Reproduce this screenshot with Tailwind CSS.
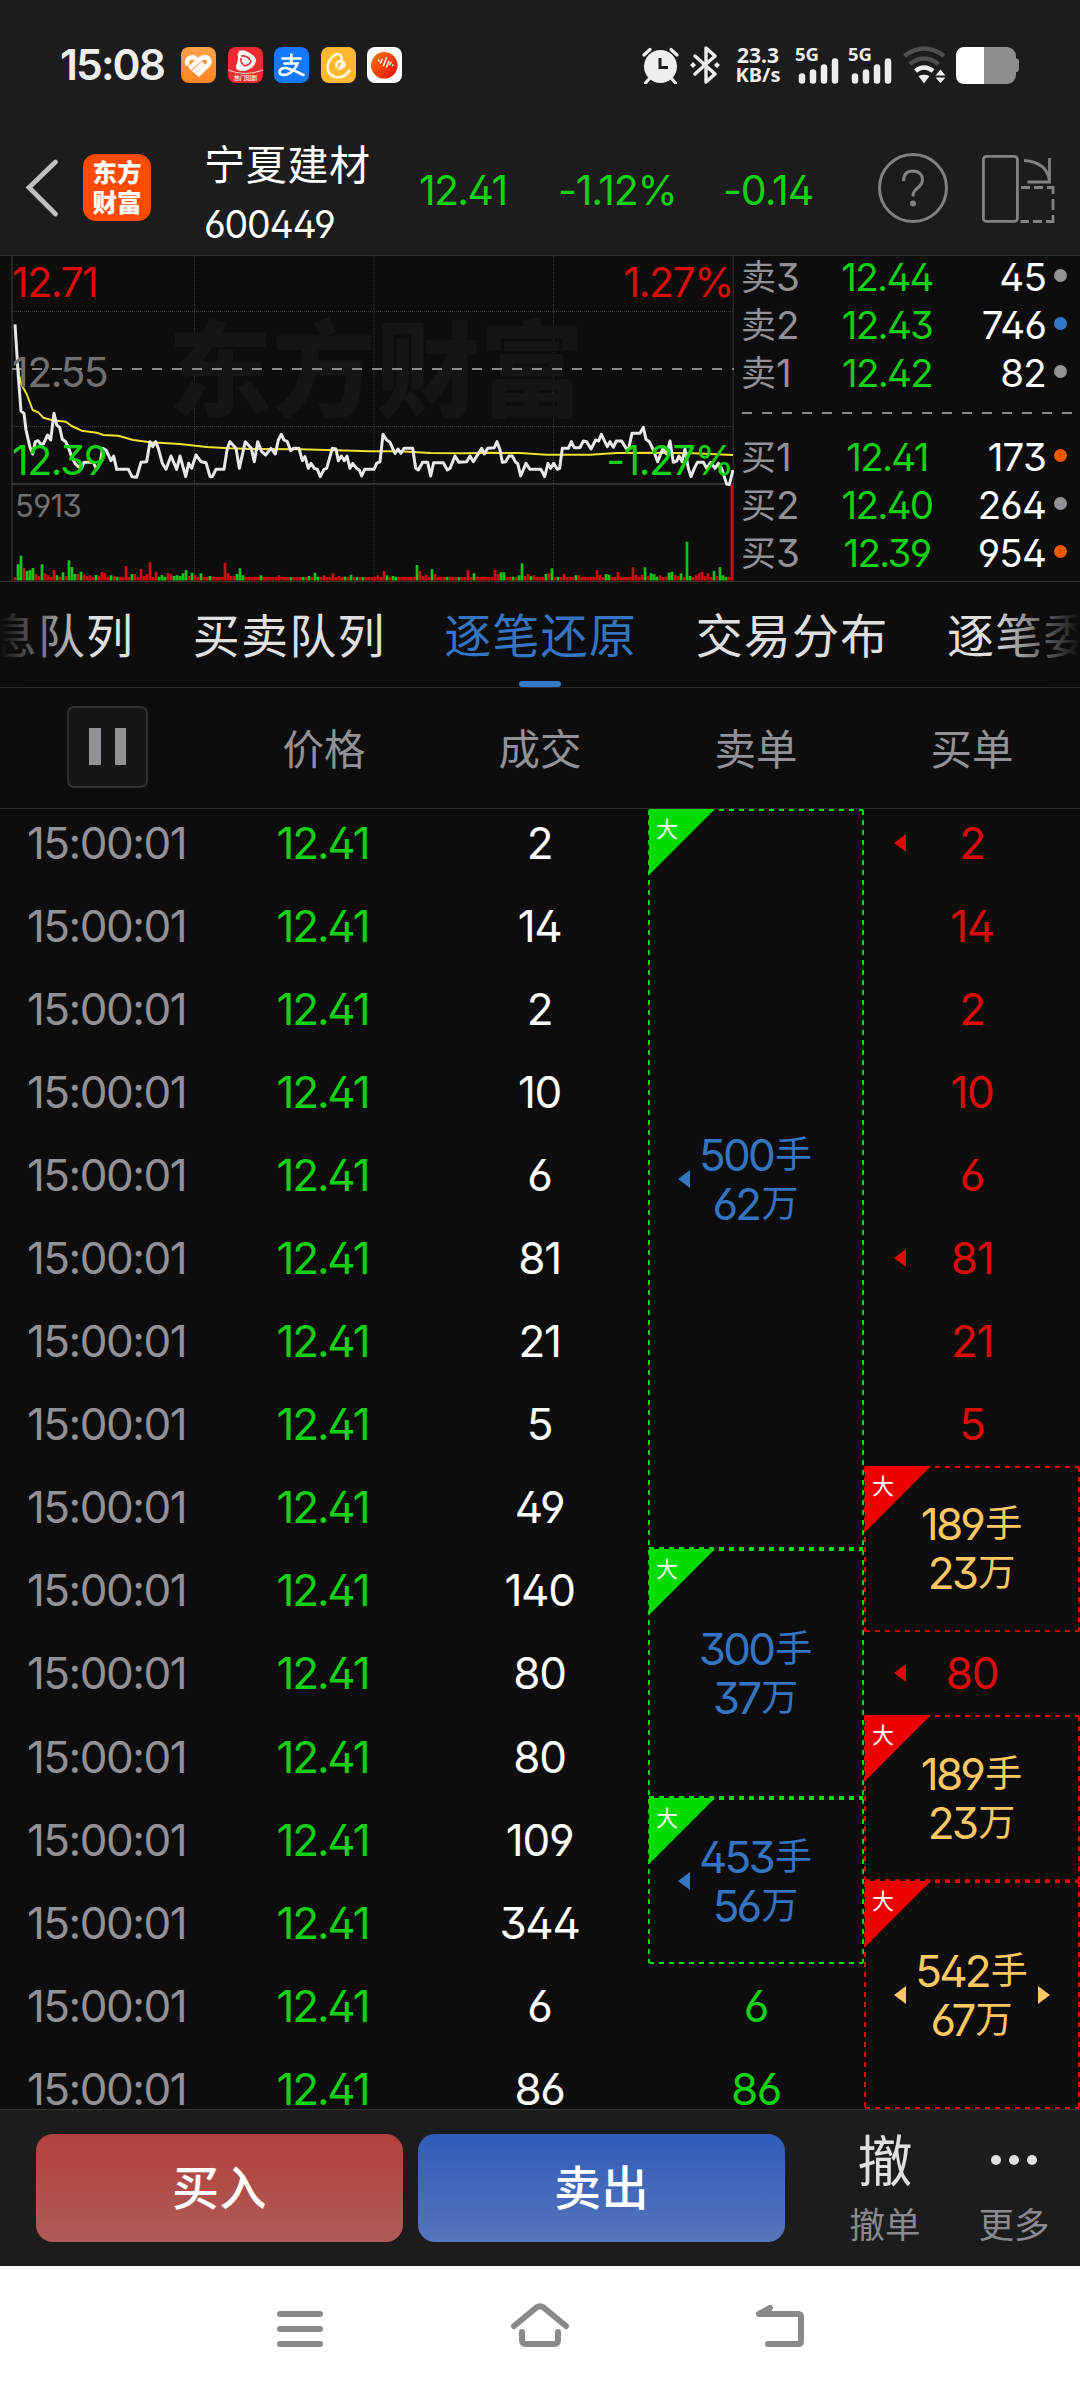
<!DOCTYPE html>
<html lang="zh-CN">
<head>
<meta charset="utf-8">
<title>宁夏建材 600449</title>
<script src="https://cdn.jsdelivr.net/npm/@tailwindcss/browser@4"></script>
</head>
<body class="w-[1080px] h-[2392px] overflow-hidden bg-[#0d0d0d] text-white font-[Inter,'Noto_Sans_CJK_SC',sans-serif] [font-feature-settings:'ss01'] whitespace-nowrap">

<header class="h-[256px] bg-[#1c1c1c] border-b border-[#333]">
  <!-- status bar -->
  <div class="h-[130px] flex items-center pl-[60px] text-[#eee]">
    <div class="w-[121px] text-[42.500px] leading-[50px] font-semibold tracking-[-1.900px]">15:08</div>
    <div class="flex gap-[11.5px]">
      <svg class="w-[35px] h-[36px]" viewBox="0 0 35 36"><defs><linearGradient id="o" x1="0" y1="0" x2="0" y2="1"><stop offset="0" stop-color="#ffa24a"/><stop offset="1" stop-color="#ff8420"/></linearGradient></defs><rect width="35" height="36" rx="8" fill="url(#o)"/><g fill="none" stroke="#fff" stroke-width="4.600" stroke-linecap="butt"><path d="M6.500 18.500Q4.500 12 10 10.500Q13 9.800 15 12"/><path d="M8.500 21.500L19.500 11.500Q26 8.500 28.300 13Q29 16.500 26 19L16 28.500"/><path d="M12.500 25.300L22.500 15.800"/></g></svg>
      <svg class="w-[35px] h-[36px]" viewBox="0 0 35 36"><rect width="35" height="36" rx="8" fill="#f02a30"/><path d="M0 23Q17.500 30 35 23" fill="none" stroke="#ffd9d0" stroke-width="1"/><path d="M11 4Q15 2 20 5Q29 10 28 14Q26 22 16 24Q7 24 8 19Q11 12 9.500 8Z" fill="#fff"/><path d="M13 9Q19 8 22 13M23 13Q23 18 16 19M13 11Q12 16 17 19" fill="none" stroke="#f02a30" stroke-width="1.600"/><text x="17.500" y="33.300" text-anchor="middle" font-size="5.800" font-weight="500" fill="#fff" font-family="Noto Sans CJK SC">热门短剧</text></svg>
      <svg class="w-[35px] h-[36px]" viewBox="0 0 35 36"><rect width="35" height="36" rx="8" fill="#1677ff"/><g fill="none" stroke="#fff" stroke-width="2.600" stroke-linecap="round"><path d="M8.500 11.500H26.500M17.300 7.500V16M10.500 16.500H23.500Q20 25 13 27.500Q6 29 5.500 25Q6 20.500 12 21Q20 23 29.500 28"/></g></svg>
      <svg class="w-[35px] h-[36px]" viewBox="0 0 35 36"><rect width="35" height="36" rx="8" fill="#ffb830"/><path d="M15.500 19.500Q15 14 19.500 14Q24 14.500 23.500 18.500Q22 21.500 18.500 21.500Q21.500 18 21 12Q20 6.500 16 7Q8.500 10 6.500 19Q6.500 28 14 30Q24 31.500 28.500 23.500" fill="none" stroke="#fff6dc" stroke-width="2.600" stroke-linecap="round"/></svg>
      <svg class="w-[35px] h-[36px]" viewBox="0 0 35 36"><defs><linearGradient id="r" x1="0" y1="0" x2="1" y2="1"><stop offset="0" stop-color="#f87a08"/><stop offset="1" stop-color="#e80808"/></linearGradient></defs><rect width="35" height="36" rx="8" fill="#fff"/><circle cx="17.300" cy="18.300" r="13.300" fill="url(#r)"/><path d="M11.500 13L12 14M13.500 16L15 12.500M16.500 18.500L19.500 11M19.500 20L22 14.500M23 17.500L24 15.500M25.500 18.500L26 18" stroke="#fff" stroke-width="1.500" stroke-linecap="round"/></svg>
    </div>
    <svg class="ml-[240px] w-[37px] h-[37px]" viewBox="0 0 37 37"><circle cx="18.500" cy="19.500" r="16.500" fill="#eee"/><path d="M2 8L8 2.500M35 8L29 2.500M7 32L3.500 36M30 32L33.500 36" stroke="#eee" stroke-width="3.200" stroke-linecap="round"/><path d="M18 11V20.500H26" fill="none" stroke="#1c1c1c" stroke-width="3"/></svg>
    <svg class="ml-[11px] w-[30px] h-[38px]" viewBox="0 0 30 38"><path d="M5 10L25 28L16 36V2L25 10L5 28" fill="none" stroke="#eee" stroke-width="3.400" stroke-linejoin="round" stroke-linecap="round"/><path d="M3 16l3 3-3 3-3-3zM27 16l3 3-3 3-3-3z" fill="#eee"/></svg>
    <div class="ml-[14px] w-[48px] text-center font-['Noto_Sans'] font-bold text-[21px] leading-[20.500px]"><div>23.3</div><div class="text-[20px]">KB/s</div></div>
    <div class="ml-[14px] flex gap-[10px]" id="signals"></div>
    <svg class="ml-[10px] w-[45px] h-[38px]" viewBox="0 0 45 38"><g fill="none" stroke-width="4.600"><path d="M2.500 10Q22 -5 42 10" stroke="#505050"/><path d="M8 18Q22 7 36.500 18" stroke="#505050"/><path d="M13.500 25Q22 18 31 25" stroke="#eee"/></g><path d="M16.500 30Q22 27.500 27.500 30L22 37.500Z" fill="#eee"/><path d="M33.500 29.500L38.500 23.500L43.500 29.500ZM33.500 31.500L38.500 37L43.500 31.500Z" fill="#eee"/></svg>
    <svg class="ml-[9px] w-[64px] h-[37px]" viewBox="0 0 64 37"><rect width="60" height="37" rx="9" fill="#8e8e8e"/><path d="M60 11.500H61Q63 12 63 14V22Q63 24.500 61 25H60Z" fill="#8e8e8e"/><path d="M9 0H28V37H9Q0 37 0 28V9Q0 0 9 0Z" fill="#fff"/></svg>
  </div>
  <!-- title bar -->
  <div class="h-[125px] pb-[10px] flex items-center">
    <svg class="ml-[24px] w-[36px] h-[60px]" viewBox="0 0 36 60"><path d="M31.500 4L5 29.500L31.500 56" fill="none" stroke="#c0c0c0" stroke-width="4.800" stroke-linecap="round"/></svg>
    <div class="ml-[23px] w-[68px] h-[67px] rounded-[13px] bg-[#ff4a04] flex flex-col items-center justify-center font-['Noto_Sans_CJK_SC'] font-black text-[24.500px] leading-[30px] pb-[1px]"><div>东方</div><div>财富</div></div>
    <div class="ml-[53px] mt-[12px] w-[215px]">
      <div class="font-['Noto_Sans_CJK_SC'] text-[41px] leading-[59px] tracking-[0.700px] mb-[2px]">宁夏建材</div>
      <div class="text-[37.500px] leading-[61px] tracking-[-1.200px]">600449</div>
    </div>
    <div class="w-[139px] text-[41px] tracking-[-1.700px] text-[#12d012] pt-[6px]">12.41</div>
    <div class="w-[165px] text-[41px] tracking-[-1.200px] text-[#12d012] pt-[6px]">-1.12%</div>
    <div class="w-[156px] text-[41px] tracking-[-1px] text-[#12d012] pt-[6px]">-0.14</div>
    <div class="w-[70px] h-[70px] rounded-full border-[3px] border-[#828282] flex items-center justify-center -ml-px">
      <svg class="w-[24px] h-[38px]" viewBox="0 0 24 38"><path d="M2.500 12Q2.500 2 12 2Q21.500 2.500 21.500 11Q21 16 16 19.500Q12 22.500 12 27.500" fill="none" stroke="#828282" stroke-width="3"/><circle cx="12" cy="34.500" r="3" fill="#828282"/></svg>
    </div>
    <svg class="ml-[33px] w-[75px] h-[70px]" viewBox="0 0 75 70"><g fill="none" stroke="#828282" stroke-width="2.800"><rect x="2.400" y="3.400" width="34" height="65" rx="3"/><path d="M43 7.500Q66 9 68.500 28M46.500 29H68.500V5"/><path d="M40 34.500h9m4 0h9m4 0h6v6.500m0 5v11m0 5v6.500h-7m-4 0h-9m-4 0h-8.500"/></g></svg>
  </div>
</header>

<!-- quote panel -->
<section class="h-[326px] flex border-b border-[#333]">
  <div class="relative w-[734px] h-[325px]">
    <svg id="chart" class="absolute inset-0 w-[734px] h-[325px]" viewBox="0 256 734 325"></svg>
    <div class="absolute left-[168px] top-[43px] font-['Noto_Sans_CJK_SC'] font-black text-[104px] leading-[130px] text-[#151515]">东方财富</div>
    <svg id="lines" class="absolute inset-0 w-[734px] h-[325px]" viewBox="0 256 734 325"></svg>
    <div class="absolute left-[12px] top-[0px] h-full w-[721px] text-[41px] leading-[50px] tracking-[-1.500px]">
      <div class="absolute left-0 top-px text-[#dc0a0a]">12.71</div>
      <div class="absolute left-0 top-[91px] text-[#707070]">12.55</div>
      <div class="absolute left-0 top-[179px] text-[#12d012]">12.39</div>
      <div class="absolute left-[3px] top-[225px] text-[31px] text-[#707070] tracking-[-0.700px]">5913</div>
      <div class="absolute right-0 top-px text-[#dc0a0a]">1.27%</div>
      <div class="absolute right-0 top-[179px] text-[#12d012]">-1.27%</div>
    </div>
  </div>
  <div class="flex-1 border-l border-[#333] pl-[7px] -ml-px">
    <div id="asks" class="h-[140px] -mt-[3px]"></div>
    <svg class="w-[332px] h-[2px] mt-[19px]" viewBox="0 0 332 2"><path d="M1 1H331" stroke="#8a8a8a" stroke-width="2" stroke-dasharray="10 10"/></svg>
    <div id="bids" class="mt-[19px]"></div>
  </div>
</section>

<!-- tabs -->
<nav class="relative h-[106px] border-b border-[#2c2c2c] flex items-center gap-[58.600px] pb-[3px] text-[47px] leading-[60px] tracking-[1.200px] text-[#e0e0e0] font-['Noto_Sans_CJK_SC'] overflow-hidden">
  <div class="-ml-[58.600px]">信息队列</div>
  <div>买卖队列</div>
  <div class="text-[#3474c0]">逐笔还原</div>
  <div>交易分布</div>
  <div>逐笔委托</div>
  <div class="absolute left-0 top-0 h-full w-[88px] bg-linear-to-r from-[#0d0d0d] to-transparent"></div>
  <div class="absolute right-0 top-0 h-full w-[88px] bg-linear-to-l from-[#0d0d0d] to-transparent"></div>
  <div class="absolute left-[519px] bottom-0 w-[42px] h-[6px] rounded-full bg-[#3478c8]"></div>
</nav>

<!-- column heads -->
<div class="h-[121px] border-b border-[#2c2c2c] grid grid-cols-5 items-center text-center text-[41.500px] leading-[60px] text-[#919196] font-['Noto_Sans_CJK_SC'] *:-mt-[2px]">
  <div class="ml-[67px] w-[81px] h-[82px] rounded-[7px] border-2 border-[#303030] bg-[#161616] flex items-center justify-center gap-[14px]"><i class="w-[11.500px] h-[37px] bg-[#919196] -mt-[1px]"></i><i class="w-[11.500px] h-[37px] bg-[#919196] -mt-[1px]"></i></div>
  <div>价格</div><div>成交</div><div>卖单</div><div>买单</div>
</div>

<!-- tick list -->
<main class="h-[1300px] overflow-hidden grid grid-cols-5 items-start text-[44px] leading-[50px] text-center">
  <div id="c-time" class="-mt-[8px] text-[#919196] tracking-[-1.500px] pr-[3px]"></div>
  <div id="c-price" class="-mt-[8px] text-[#12d012] tracking-[-2.200px] pr-[3px]"></div>
  <div id="c-vol" class="-mt-[8px] tracking-[-1.300px] pr-[1px]"></div>
  <div id="c-sell" class="text-[#12d012] tracking-[-1.300px]"></div>
  <div id="c-buy" class="-mt-[8px] text-[#dc0a0a] tracking-[-1.300px]"></div>
</main>

<!-- trade bar -->
<footer class="h-[157px] bg-[#1c1c1c] border-t border-[#333] flex items-center pl-[36px] font-['Noto_Sans_CJK_SC']">
  <div class="w-[367px] h-[108px] rounded-[17px] bg-linear-to-b from-[#b3403c] to-[#ae5b57] flex items-center justify-center text-[47px] font-medium pb-[6px] tracking-[0.500px]">买入</div>
  <div class="ml-[15px] w-[367px] h-[108px] rounded-[17px] bg-linear-to-b from-[#305bb8] to-[#5575bc] flex items-center justify-center text-[47px] font-medium pb-[6px] tracking-[0.500px]">卖出</div>
  <div class="ml-[50px] -mt-[3px] w-[100px] text-center"><div class="text-[55px] leading-[60px] -mt-[3px] text-[#e0e0e0]">撤</div><div class="text-[35.500px] leading-[40px] mt-[16px] text-[#8a8a8e]">撤单</div></div>
  <div class="ml-[29px] -mt-[3px] w-[100px] text-center"><div class="h-[60px] -mt-[3px] flex items-center justify-center gap-[8px] pt-[5px]"><i class="w-[10px] h-[10px] rounded-full bg-[#e0e0e0]"></i><i class="w-[10px] h-[10px] rounded-full bg-[#e0e0e0]"></i><i class="w-[10px] h-[10px] rounded-full bg-[#e0e0e0]"></i></div><div class="text-[35.500px] leading-[40px] mt-[16px] text-[#8a8a8e]">更多</div></div>
</footer>

<!-- system navigation -->
<div class="h-[126px] bg-white">
  <svg class="w-[1080px] h-[126px]" viewBox="0 2266 1080 126"><g fill="none" stroke="#8a8a8a" stroke-width="6" stroke-linecap="round" stroke-linejoin="round"><path d="M280 2314H320M280 2329H320M280 2344H320"/><path d="M514 2326L536.500 2307.500Q540 2305 543.500 2307.500L566 2326M522 2332V2340Q522 2344 526 2344H554Q558 2344 558 2340V2332"/><path d="M770 2308L759 2314H798Q801 2314 801 2317V2341Q801 2344 798 2344H768"/></g></svg>
</div>

<script>
const $ = id => document.getElementById(id);
const rep = (n, f) => Array.from({ length: n }, (_, i) => f(i)).join('');

$('signals').innerHTML = rep(2, () => `
  <div class="relative w-[43px] h-[38px]">
    <span class="absolute -left-px -top-[5px] font-['Noto_Sans'] font-bold text-[18.500px] leading-[26px]">5G</span>
    <svg class="w-[43px] h-[38px]" viewBox="0 0 43 38"><path d="M6 30.500V34.500M17 26.500V34.500M28 21.500V34.500M39 15.500V34.500" stroke="#eee" stroke-width="6.500" stroke-linecap="round"/></svg>
  </div>`);

// chart grid
$('chart').innerHTML = '<g fill="none" stroke="#333"><path d="M12 256V581M733.500 256V581" stroke-width="2" stroke="#282828"/><path d="M12 484H734" stroke-width="2"/><path d="M12 311.500H734M12 426.500H734M194.500 256V581M374 256V581M553.500 256V581" stroke-dasharray="1 1" stroke="#3a3a3a"/></g>';

// volume bars: position, direction, height
const special = {};
const add = (off, s) => s.split(' ').forEach(t => {
  const [, x, c, h] = t.match(/(\d+)([rg])(\d+)/);
  special[Math.round((+x + off - 45) / 9)] = [c, +h];
});
add(0, '54g47 63g73 72r36 81g27 90g30 99g36 108r18 117r12 126g47 135r20 144r14 153r10 162r30 171g14 180r10 189g23 198r12 207g59 216g39 225g18 234r18 243g25 252r16 261r12 270r14 288g15 297r12 306r24 315r20 324r10 333g14 342r12 351g10 378r42 396g18 405r18 414r10 423r33 432r12 441r18 450r53 468r25 477g10 486g15 495g10 504r22 513r18 522g12 531g14 540g12 549g20 558g30 567r12 576g22 585r14 594r10 603g20 630g12 675r52 684r20 693r12 702r12 711g18 718g35 727g14 783g14 837r14 873g9 909g9 927g12 943g22 952g10 970r14 997r20 1015r12 1033g10 1051g15 1069g9');
add(1080, '6g9 50r14 69r27 78g14 96g12 105g10 168g45 177r27 186r12 195r16 213g32 222r18 258g9 294g9 321r30 339g20 402r30 411r18 420g23 429g23 456g10 474g14 483g50 492r12 501r18 510g12 519r14 555g18 564r20 573g35 591g10 609r18 645g14 654r14 708r30 717r16 735g18 744g16 771r24 816r38 825r16 834r10 843r16 858g38 867r12 876g20 885g18 894g10 903r14 921r10 930g22 939g25 948r16 957r12 966g20 984g115 993g12 1011r14 1020r20 1029r24 1038r12 1047r20 1065g27 1074r12 1083g38 1092g14 1101g9 1117r286');
const bars = { r: '', g: '' };
for (let i = 0; i < 240; i++) {
  const [c, h] = special[i] || ['r', 9];
  bars[c] += `M${15 + i * 3} 580.500V${580 - h / 3}`;
}
$('lines').innerHTML = `
  <path d="M12 369H734" stroke="#8a8a8a" stroke-width="2" stroke-dasharray="10 10"/>
  <path d="${bars.r}" stroke="#d00c10" stroke-width="2.700"/><path d="${bars.g}" stroke="#14c414" stroke-width="2.700"/>
  <g transform="translate(0 250) scale(.33333)" fill="none" stroke-linejoin="round">
  <polyline stroke="#f0e030" stroke-width="6" points="50,330 57,375 65,405 80,432 98,480 115,487 130,503 155,510 197,515 215,528 245,542 290,548 310,555 355,557 400,570 450,577 540,582 620,591 690,595 750,597 900,598 1110,604 1200,604 1290,609 1400,610 1460,608 1560,609 1640,614 1770,614 1850,609 1960,608 2080,610 2199,615"/>
  <polyline stroke="#e8e8e8" stroke-width="9" points="45,223 50,300 55,380 63,483 72,490 78,540 90,592 98,612 106,575 114,572 122,582 130,582 143,555 152,570 162,490 170,525 179,532 187,568 197,575 206,595 215,620 225,640 235,650 245,655 252,637 280,637 290,658 300,640 308,595 318,600 333,632 341,618 350,658 385,658 396,680 410,682 423,637 440,635 450,575 458,590 467,575 475,595 487,640 498,658 513,618 530,658 540,618 557,680 566,640 575,655 588,615 603,635 618,638 630,680 637,680 648,658 672,658 682,595 690,575 708,595 718,655 736,575 754,595 763,635 773,575 785,605 797,615 813,595 826,612 835,570 844,553 852,570 862,575 872,602 880,595 897,595 907,632 915,620 925,655 933,640 943,655 952,658 961,680 972,658 980,655 990,620 997,595 1008,597 1015,632 1024,618 1033,632 1041,618 1050,655 1058,640 1070,655 1078,660 1085,678 1094,658 1122,658 1130,640 1140,635 1149,553 1160,570 1170,577 1185,610 1194,597 1203,610 1212,595 1238,595 1247,655 1255,660 1268,637 1283,637 1292,678 1301,638 1330,638 1342,660 1350,655 1365,618 1377,637 1400,635 1410,618 1420,635 1445,595 1453,612 1463,595 1483,593 1491,575 1500,600 1507,637 1517,635 1527,618 1537,618 1547,637 1553,640 1562,678 1578,640 1590,658 1623,658 1634,680 1644,640 1652,655 1661,640 1672,658 1679,655 1687,595 1705,595 1714,575 1723,593 1740,593 1750,573 1760,575 1773,597 1787,570 1796,573 1804,553 1822,590 1830,575 1840,592 1849,573 1865,573 1878,595 1886,596 1896,550 1920,550 1930,532 1938,568 1948,575 1960,600 1973,635 1988,597 2000,612 2010,573 2020,637 2030,633 2037,618 2046,635 2055,597 2065,655 2073,680 2083,655 2092,637 2110,637 2120,655 2132,637 2145,655 2155,640 2165,655 2180,702 2188,704 2194,680 2199,660"/>
  </g>`;

// order book
const book = (rows) => rows.map(([l, n, p, v, c]) => `
  <div class="h-[48px] flex items-center text-[38.500px] leading-[48px]">
    <div class="w-[56px] flex items-center text-[#919196]"><span class="font-['Noto_Sans_CJK_SC'] text-[35px] leading-[44px] -mt-[4px]">${l}</span><span>${n}</span></div>
    <div class="w-[180px] text-center text-[#12d012] tracking-[-1.700px]">${p}</div>
    <div class="w-[69px] flex justify-end tracking-[-0.800px]">${v}</div>
    <i class="ml-[8px] w-[13px] h-[13px] rounded-full -mt-[4px] ${c}"></i>
  </div>`).join('');
const G = 'bg-[#919196]', B = 'bg-[#3478c8]', O = 'bg-[#ee5a04]';
$('asks').innerHTML = book([['卖', 3, '12.44', 45, G], ['卖', 2, '12.43', 746, B], ['卖', 1, '12.42', 82, G]]);
$('bids').innerHTML = book([['买', 1, '12.41', 173, O], ['买', 2, '12.40', 264, G], ['买', 3, '12.39', 954, O]]);

// tick columns
const cell = (t, arrow = '') => `<div class="relative h-[83.100px] flex items-center justify-center">${arrow}<span>${t}</span></div>`;
const left = `<svg class="absolute left-[30px] top-1/2 -mt-[9px] w-[12px] h-[18px]" viewBox="0 0 12 18"><path d="M0 9L12 0V18Z" fill="currentColor"/></svg>`;
const right = `<svg class="absolute left-[174px] top-1/2 -mt-[9px] w-[12px] h-[18px]" viewBox="0 0 12 18"><path d="M12 9L0 0V18Z" fill="currentColor"/></svg>`;
const box = (h, hCls, color, txt, a, b, arrows = '') => `
  <div class="relative ${hCls} flex flex-col items-center justify-center ${txt}">
    <svg class="absolute left-0 top-0 w-[216px] h-full" viewBox="0 0 216 ${h}" preserveAspectRatio="none">
      <path d="M1 0H67L1 66Z" fill="${color}"/>
      <path d="M1 1V${h - 1}M215 1V${h - 1}M1 1H215M1 ${h - 1}H215" fill="none" stroke="${color}" stroke-width="2" stroke-dasharray="5 5"/>
    </svg>
    <span class="absolute left-[8px] top-[3px] text-[22px] leading-[30px] tracking-normal text-white font-['Noto_Sans_CJK_SC']">大</span>
    ${arrows}
    ${[[a, '手'], [b, '万']].map(([n, u]) => `<div class="h-[49px] flex items-center justify-center tracking-[-2.800px]"><span>${n}</span><span class="ml-[2px] mr-[1px] text-[37px] leading-[49px] tracking-normal font-['Noto_Sans_CJK_SC'] -mt-[5px]">${u}</span></div>`).join('')}
  </div>`;
const vols = [2, 14, 2, 10, 6, 81, 21, 5, 49, 140, 80, 80, 109, 344, 6, 86];
$('c-time').innerHTML = vols.map(() => cell('15:00:01')).join('');
$('c-price').innerHTML = vols.map(() => cell('12.41')).join('');
$('c-vol').innerHTML = vols.map(v => cell(v)).join('');
const green = '#00dc00', red = '#ee0000', blue = 'text-[#3474c0]', gold = 'text-[#ffc864]';
$('c-sell').innerHTML =
  box(740, 'h-[740px]', green, blue, 500, 62, left) +
  box(249, 'h-[249px]', green, blue, 300, 37) +
  box(166, 'h-[166px]', green, blue, 453, 56, left) + cell(6) + cell(86);
$('c-buy').innerHTML =
  [2, 14, 2, 10, 6, 81, 21, 5].map((v, i) => cell(v, i === 0 || i === 5 ? left : '')).join('') +
  box(166, 'h-[166.200px]', red, gold, 189, 23) + cell(80, left) +
  box(166, 'h-[166.200px]', red, gold, 189, 23) +
  box(228, 'h-[228px]', red, gold, 542, 67, left + right);
</script>
</body>
</html>
